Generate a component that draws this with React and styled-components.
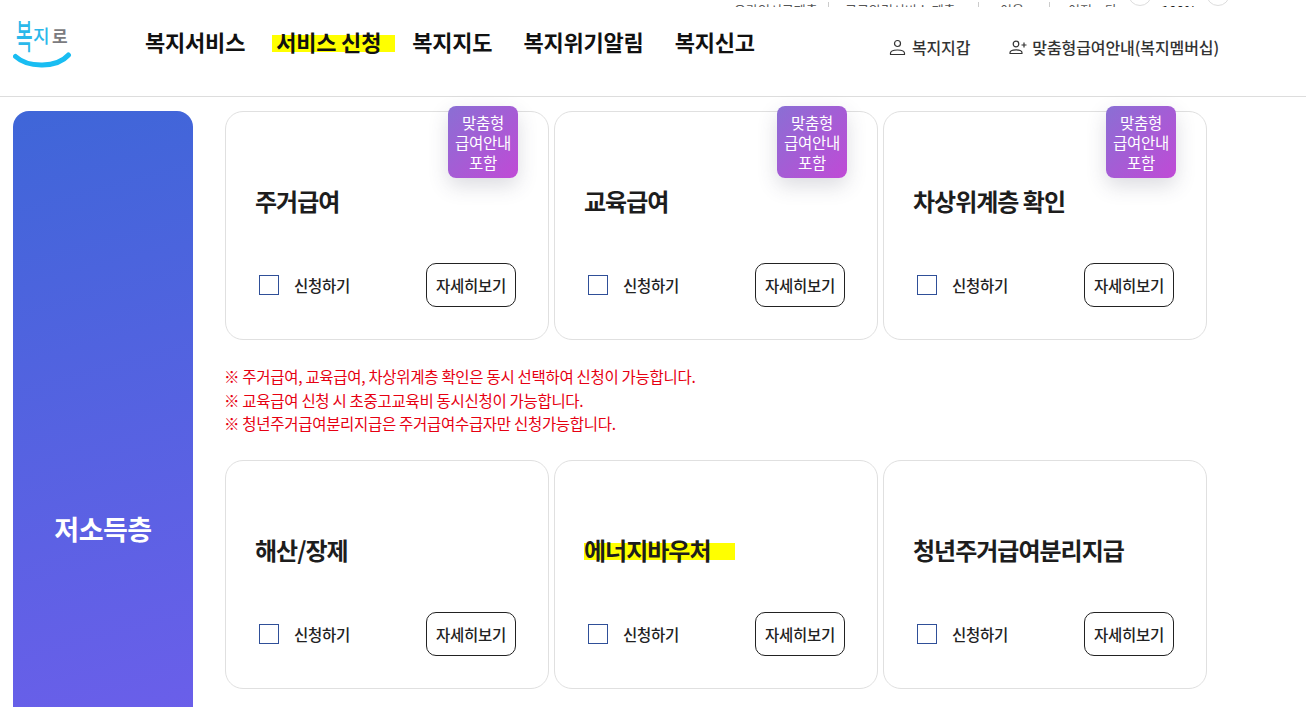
import React from "react";
import styled, { createGlobalStyle } from "styled-components";

const Global = createGlobalStyle`
  html, body { margin: 0; padding: 0; height: 707px; overflow: hidden; background: #fff; }
  body { font-family: "Noto Sans CJK KR", "Noto Sans", sans-serif; color: #222; }
  * { box-sizing: border-box; }
`;

const TopBar = styled.div`
  height: 7px; overflow: hidden; display: flex; justify-content: flex-end; align-items: flex-end;
  padding-right: 76px; font-size: 13px; line-height: 16px; color: #555; letter-spacing: 0;
`;
const TopLink = styled.span`
  flex: none; width: ${p => p.$w}px; padding-left: ${p => p.$pad}px; border-right: 1px solid #ccc; height: 16px; margin-bottom: -11px; white-space: nowrap; overflow: hidden;
  ${p => p.$last && "border-right: 0;"}
`;
const RoundButton = styled.span`
  flex: none; width: 24px; height: 24px; border-radius: 50%; border: 1px solid #ddd; margin-bottom: 1px;
`;
const Zoom = styled.span`
  flex: none; width: 54px; text-align: center; font-weight: 700; color: #222; font-size: 13px; margin-bottom: -12px;
`;

const Header = styled.header`
  height: 90px; border-bottom: 1px solid #ddd; display: flex; align-items: flex-start; padding-left: 13px; position: relative;
`;
const Logo = styled.div`
  width: 60px; margin-top: 9px; display: flex; flex-direction: column; flex: none;
`;
const LogoWord = styled.div`
  height: 36px; display: flex; padding-left: 3px; line-height: 1;
`;
const LogoChar = styled.span`
  flex: none; width: ${p => p.$w}px; font-size: ${p => p.$size}px; color: ${p => p.$color}; font-weight: ${p => p.$weight};
  transform-origin: top left;
  transform: translateY(${p => p.$y}px) scaleY(${p => p.$sy});
`;
const Smile = styled.svg`
  display: block; width: 60px; height: 18px;
`;
const Nav = styled.nav`
  display: flex; gap: 31px; margin-left: 72px; margin-top: 18px;
`;
const NavItem = styled.a`
  position: relative; z-index: 0; font-size: 22px; font-weight: 700; line-height: 32px; color: #111; letter-spacing: -0.2px; white-space: nowrap;
  ${p => p.$mark && `
    &::before {
      content: ""; position: absolute; z-index: -1; left: -4px; right: -14px; top: 10px; height: 17px; background: #ffff00;
    }
  `}
`;
const Utility = styled.div`
  margin-left: auto; margin-right: 87px; margin-top: 30px; display: flex; gap: 39px;
`;
const UtilityLink = styled.a`
  display: flex; align-items: center; gap: ${p => p.$gap}px; font-size: 16px; font-weight: 500; line-height: 20px; color: #333; letter-spacing: -0.1px; white-space: nowrap;
`;

const Main = styled.main`
  display: flex; align-items: stretch; gap: 32px; padding: 14px 0 0 13px; min-height: 848px;
`;
const Side = styled.aside`
  flex: none; width: 180px; min-height: 834px; border-radius: 16px 16px 0 0;
  background: linear-gradient(165deg, #3f66d8 0%, #7a5cf0 100%);
  color: #fff; font-size: 27px; font-weight: 700; letter-spacing: -0.5px;
  display: flex; align-items: center; justify-content: center;
`;
const Content = styled.section`
  flex: none; width: 982px;
`;
const CardRow = styled.div`
  display: grid; grid-template-columns: repeat(3, 324px); gap: 5px;
`;
const Card = styled.article`
  position: relative; height: 229px; border: 1px solid #e0e0e0; border-radius: 18px;
  padding: 0 32px 32px 29px; display: flex; flex-direction: column;
`;
const Badge = styled.div`
  position: absolute; top: -6px; right: 30px; width: 70px; height: 72px; border-radius: 8px;
  background: linear-gradient(135deg, #8a6fd4 0%, #c04ad6 100%);
  box-shadow: 0 8px 20px rgba(60, 60, 90, .18);
  color: #fff; font-size: 15.5px; line-height: 20px; text-align: center; padding-top: 6px; letter-spacing: -0.3px;
`;
const Title = styled.h3`
  margin: 71px 0 0; font-size: 24px; font-weight: 700; line-height: 36px; color: #1d1d1d; letter-spacing: -1px;
  span {
    display: inline-block; padding-right: 25px;
    background: linear-gradient(#ffff00, #ffff00) 0 11px / 100% 17px no-repeat;
  }
`;
const Actions = styled.div`
  margin-top: auto; display: flex; align-items: center; justify-content: space-between;
`;
const Check = styled.label`
  display: flex; align-items: center; gap: 15px; padding-left: 4px; font-size: 15.5px; font-weight: 500; color: #222; letter-spacing: -0.3px;
`;
const Box = styled.span`
  width: 20px; height: 20px; border: 1px solid #2f4f98; background: #fff; flex: none;
`;
const Detail = styled.button`
  width: 90px; height: 44px; border: 1px solid #222; border-radius: 10px; background: #fff; padding: 0;
  font-family: inherit; font-size: 15.5px; font-weight: 500; color: #222; letter-spacing: -0.3px;
`;
const Notes = styled.ul`
  list-style: none; margin: 25px 0 24px -1px; padding: 0; color: #e60012; font-size: 15.5px; line-height: 23.5px; letter-spacing: -0.3px; height: 71px;
`;

const UserIcon = () => (
  <svg width="17" height="17" viewBox="0 0 17 17" fill="none" stroke="#333" strokeWidth="1.2">
    <circle cx="8.5" cy="4.5" r="3" />
    <path d="M1.5 15.5v-1.2c0-2 2-3.3 7-3.3s7 1.300 7 3.300v1.200z" strokeLinejoin="round" />
  </svg>
);
const UserPlusIcon = () => (
  <svg width="18" height="15" viewBox="0 0 18 15" fill="none" stroke="#333" strokeWidth="1.2">
    <circle cx="7" cy="4" r="2.800" />
    <path d="M1 13.500v-.8c0-1.800 2-2.900 6-2.900s6 1.100 6 2.900v.8z" strokeLinejoin="round" />
    <path d="M12.500 5h5M15 2.500v5" />
  </svg>
);

const topRow = [
  { title: "주거급여" },
  { title: "교육급여" },
  { title: "차상위계층 확인" },
];
const bottomRow = [
  { title: "해산/장제", plain: true },
  { title: "에너지바우처", plain: true, mark: true },
  { title: "청년주거급여분리지급", plain: true },
];
const notes = [
  "※ 주거급여, 교육급여, 차상위계층 확인은 동시 선택하여 신청이 가능합니다.",
  "※ 교육급여 신청 시 초중고교육비 동시신청이 가능합니다.",
  "※ 청년주거급여분리지급은 주거급여수급자만 신청가능합니다.",
];

const ServiceCard = ({ title, plain, mark }) => (
  <Card>
    {!plain && <Badge>맞춤형<br />급여안내<br />포함</Badge>}
    <Title>{mark ? <span>{title}</span> : title}</Title>
    <Actions>
      <Check><Box />신청하기</Check>
      <Detail>자세히보기</Detail>
    </Actions>
  </Card>
);

export default function App() {
  return (
    <>
      <Global />
      <TopBar>
        <TopLink $w={95} $pad={0}>온라인서류제출</TopLink>
        <TopLink $w={150} $pad={16}>공공알림서비스 제출</TopLink>
        <TopLink $w={71} $pad={21}>이용</TopLink>
        <TopLink $w={78} $pad={18} $last>이전 · 다</TopLink>
        <RoundButton />
        <Zoom>100%</Zoom>
        <RoundButton />
      </TopBar>
      <Header>
        <Logo>
          <LogoWord>
            <LogoChar $w={17} $size={18} $weight={500} $sy={1.9} $color="#2bb8ea" $y={1}>복</LogoChar>
            <LogoChar $w={19} $size={18} $weight={500} $sy={1} $color="#2bb8ea" $y={10}>지</LogoChar>
            <LogoChar $w={17} $size={17} $weight={700} $sy={1} $color="#7b7b80" $y={11}>로</LogoChar>
          </LogoWord>
          <Smile viewBox="0 0 60 18">
            <path d="M2.500 4.500C15 16 44 16 55.500 3" fill="none" stroke="#19bdf2" strokeWidth="5" strokeLinecap="round" />
          </Smile>
        </Logo>
        <Nav>
          <NavItem>복지서비스</NavItem>
          <NavItem $mark>서비스 신청</NavItem>
          <NavItem>복지지도</NavItem>
          <NavItem>복지위기알림</NavItem>
          <NavItem>복지신고</NavItem>
        </Nav>
        <Utility>
          <UtilityLink $gap={6}><UserIcon />복지지갑</UtilityLink>
          <UtilityLink $gap={5}><UserPlusIcon />맞춤형급여안내(복지멤버십)</UtilityLink>
        </Utility>
      </Header>
      <Main>
        <Side>저소득층</Side>
        <Content>
          <CardRow>
            {topRow.map(c => <ServiceCard key={c.title} {...c} />)}
          </CardRow>
          <Notes>
            {notes.map(n => <li key={n}>{n}</li>)}
          </Notes>
          <CardRow>
            {bottomRow.map(c => <ServiceCard key={c.title} {...c} />)}
          </CardRow>
        </Content>
      </Main>
    </>
  );
}
